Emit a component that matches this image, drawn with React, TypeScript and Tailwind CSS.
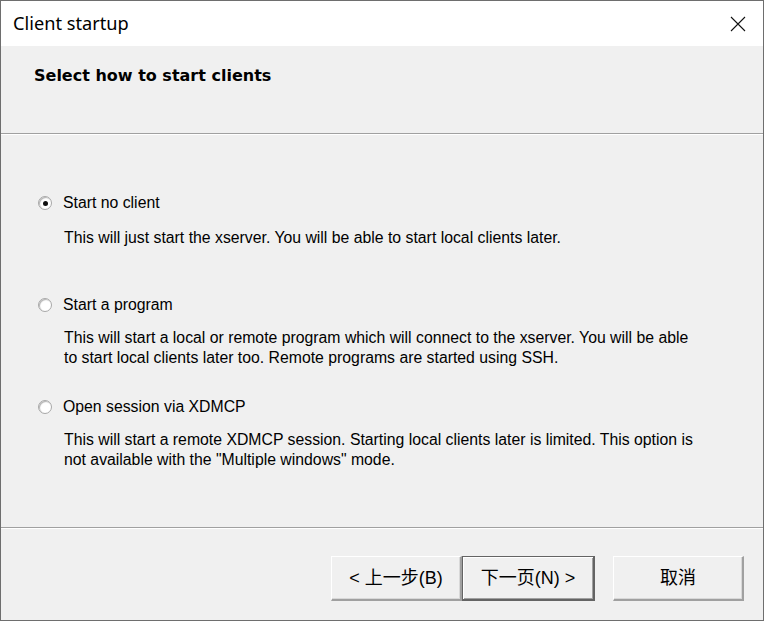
import React from "react";

const Radio = ({ checked }: { checked?: boolean }) => (
  <div className="w-[14px] h-[14px] rounded-full border border-[#a8a8a8] bg-white flex items-center justify-center shrink-0 shadow-[inset_1px_1px_1px_rgba(0,0,0,0.3)]">
    {checked && <div className="w-[5px] h-[5px] rounded-full bg-[#111]" />}
  </div>
);

const Option = ({
  label,
  desc,
  checked,
  descGap,
}: {
  label: string;
  desc: string[];
  checked?: boolean;
  descGap: string;
}) => (
  <div className="flex flex-col">
    <div className="flex items-center gap-[11px] pl-[37px] h-[20px]">
      <Radio checked={checked} />
      <span className="text-[15.8px] text-black leading-[20px]">{label}</span>
    </div>
    <div className={"pl-[63px] text-[15.8px] leading-[20.5px] text-black " + descGap}>
      {desc.map((d, i) => (
        <div key={i}>{d}</div>
      ))}
    </div>
  </div>
);

const Btn = ({ children, def }: { children: React.ReactNode; def?: boolean }) => (
  <div
    className={
      "h-[45px] flex items-center justify-center text-[18px] text-black bg-[#f0f0f0] " +
      (def
        ? "w-[133px] border border-[#646464] border-r-[2px] border-b-[2px] shadow-[inset_1px_1px_0_#ffffff,inset_-1px_-1px_0_#a0a0a0]"
        : "w-[131px] border-t border-l border-t-white border-l-white border-b-[2px] border-r-[2px] border-b-[#a0a0a0] border-r-[#a0a0a0] shadow-[inset_-1px_-1px_0_#d8d8d8]")
    }
  >
    {children}
  </div>
);

export default function App() {
  return (
    <div
      className="w-[764px] h-[621px] border border-[#6e6e6e] bg-[#f0f0f0] flex flex-col overflow-hidden"
      style={{ fontFamily: '"Liberation Sans", Arial, "Noto Sans CJK SC", sans-serif' }}
    >
      <div className="h-[45px] bg-white flex items-center justify-between shrink-0">
        <span
          className="pl-[12px] text-[18.2px] text-black"
          style={{ fontFamily: '"Noto Sans", "Open Sans", sans-serif' }}
        >
          Client startup
        </span>
        <svg width="16" height="16" viewBox="0 0 16 16" className="mr-[17px]">
          <path d="M1 1 L15 15 M15 1 L1 15" stroke="#111" strokeWidth="1.1" />
        </svg>
      </div>
      <div className="h-[87px] shrink-0 pl-[33px] pt-[18px]">
        <span
          className="text-[16px] font-bold text-black"
          style={{ fontFamily: '"DejaVu Sans", Verdana, sans-serif' }}
        >
          Select how to start clients
        </span>
      </div>
      <div className="h-[2px] border-t border-[#a0a0a0] bg-white shrink-0" />
      <div className="flex-1 flex flex-col pt-[58px]">
        <Option
          checked
          descGap="mt-[15px]"
          label="Start no client"
          desc={["This will just start the xserver. You will be able to start local clients later."]}
        />
        <div className="h-[46px]" />
        <Option
          descGap="mt-[13px]"
          label="Start a program"
          desc={[
            "This will start a local or remote program which will connect to the xserver. You will be able",
            "to start local clients later too. Remote programs are started using SSH.",
          ]}
        />
        <div className="h-[28px]" />
        <Option
          descGap="mt-[13px]"
          label="Open session via XDMCP"
          desc={[
            "This will start a remote XDMCP session. Starting local clients later is limited. This option is",
            'not available with the "Multiple windows" mode.',
          ]}
        />
      </div>
      <div className="h-[2px] border-t border-[#a0a0a0] bg-white shrink-0" />
      <div className="h-[91px] shrink-0 flex items-start pt-[27px] pl-[330px]">
        <Btn>&lt; 上一步(B)</Btn>
        <Btn def>下一页(N) &gt;</Btn>
        <div className="w-[18px]" />
        <Btn>取消</Btn>
      </div>
    </div>
  );
}
